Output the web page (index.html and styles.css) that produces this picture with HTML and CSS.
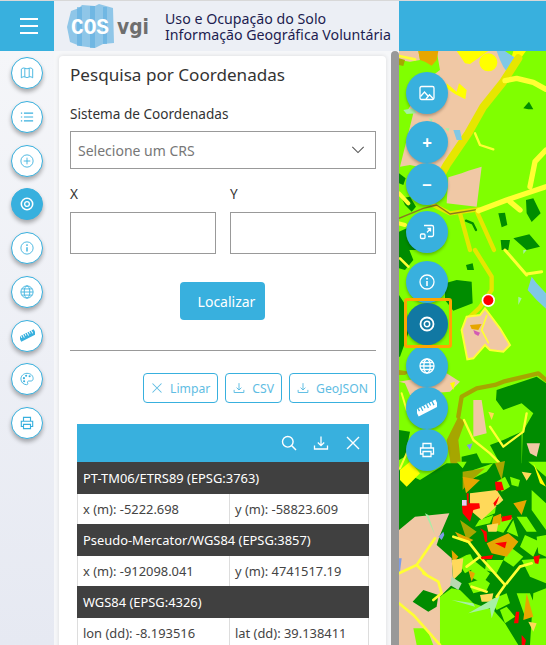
FILE: index.html
```html
<!DOCTYPE html>
<html lang="pt">

<head>
  <meta charset="UTF-8">
  <meta name="viewport" content="width=device-width, initial-scale=1.0">
  <title>COS VGI - Pesquisa por Coordenadas</title>
  <link rel="stylesheet" href="styles.css">
</head>

<body>
  <!-- Icons -->
  <svg class="sprite" aria-hidden="true">
    <symbol id="i-map" viewBox="0 0 16 16"><path d="M1.500 3.500Q3.500 1.500 5.500 2.500Q8 4 10.500 2.500Q12.500 1.500 14.500 3.500V13.500Q12.500 11.500 10.500 12.500Q8 14 5.500 12.500Q3.500 11.500 1.500 13.500ZM5.500 2.500V12.500M10.500 2.500V12.500" /></symbol>
    <symbol id="i-list" viewBox="0 0 16 16"><path d="M4.500 3.500H15M4.500 8H15M4.500 12.500H15M1 3.500H2.500M1 8H2.500M1 12.500H2.500" stroke-width="1.300" /></symbol>
    <symbol id="i-plus" viewBox="0 0 16 16"><circle cx="8" cy="8" r="7" /><path d="M8 4.200V11.800M4.200 8H11.800" /></symbol>
    <symbol id="i-target" viewBox="0 0 16 16"><circle cx="8" cy="8" r="6.500" stroke-width="1.800" /><circle cx="8" cy="8" r="2.700" stroke-width="1.500" /></symbol>
    <symbol id="i-info" viewBox="0 0 16 16"><circle cx="8" cy="8" r="7" /><path d="M8 7V12" stroke-width="1.600" /><circle class="solid" cx="8" cy="4.700" r="1" /></symbol>
    <symbol id="i-globe" viewBox="0 0 16 16"><circle cx="8" cy="8" r="7" /><ellipse cx="8" cy="8" rx="3.200" ry="7" /><path d="M1 8H15M2 4.500H14M2 11.500H14" /></symbol>
    <symbol id="i-ruler" viewBox="0 0 16 16"><path class="solid" fill-rule="evenodd" transform="rotate(-27 8 8)" d="M-1 5H17V11H-1ZM1 5V7.500H2V5ZM3.500 5V8.500H4.500V5ZM6 5V7.500H7V5ZM8.500 5V8.500H9.500V5ZM11 5V7.500H12V5ZM13.500 5V8.500H14.500V5Z" /></symbol>
    <symbol id="i-palette" viewBox="0 0 16 16"><path d="M8 1.500C4 1.500 1 4.500 1 8C1 11.500 4 14.500 7.500 14.500C9 14.500 9.200 13.500 8.700 12.500C8.200 11.200 9 10.300 10 10.300H12.500C14 10.300 15 9.300 15 7.500C15 4 12 1.500 8 1.500Z" /><circle class="solid" cx="4.500" cy="7" r="1.200" /><circle class="solid" cx="7" cy="4.200" r="1.200" /><circle class="solid" cx="11" cy="4.800" r="1.200" /><circle class="solid" cx="4.700" cy="10.500" r="1.200" /></symbol>
    <symbol id="i-print" viewBox="0 0 16 16"><path d="M4 6V1.500H12V6M4 12H1.500V6H14.500V12H12M4 9.500H12V14.500H4Z" stroke-width="1.300" /></symbol>
    <symbol id="i-image" viewBox="0 0 16 16"><rect x="1" y="1.500" width="14" height="13" rx="1.500" /><path d="M1.500 11.500L5.500 7L8.800 10.800M7 14L10.500 9.800L14.500 14" /></symbol>
    <symbol id="i-fit" viewBox="0 0 16 16"><path d="M5 1.500H13A1.500 1.500 0 0 1 14.500 3V11A1.500 1.500 0 0 1 13 12.500H9M8 8.500L11.500 4.500M8.500 4.500H11.500V7.500" /><rect x="1.500" y="10" width="4.500" height="4.500" rx="1" /></symbol>
    <symbol id="i-download" viewBox="0 0 16 16"><path d="M8 1.500V10.500M4.800 7.500L8 10.700L11.200 7.500M1.500 10.500V14H14.500V10.500" stroke-width="1.300" /></symbol>
    <symbol id="i-search" viewBox="0 0 16 16"><circle cx="6.800" cy="6.800" r="5.300" stroke-width="1.400" /><path d="M10.800 10.800L15 15" stroke-width="1.500" /></symbol>
    <symbol id="i-x" viewBox="0 0 16 16"><path d="M2 2L14 14M14 2L2 14" stroke-width="1.400" /></symbol>
    <symbol id="i-chevron" viewBox="0 0 16 16"><path d="M1.500 4.500L8 11L14.500 4.500" /></symbol>
  </svg>

  <div class="app">
    <header class="topbar">
      <button class="burger" aria-label="Menu"><span></span><span></span><span></span></button>
      <div class="brand">
        <svg class="logo" viewBox="0 0 96 46">
          <path class="logo-back" d="M6 8L14 5L17 2L30 3L34 1L48 5L49 40L38 41L30 45L15 43L5 39L2 24Z" />
          <path class="logo-stripe" d="M12 4H17V43H12ZM25 3H30V45H25ZM38 4H42V41H38Z" />
          <text class="logo-cos" x="6" y="31" textLength="38" lengthAdjust="spacingAndGlyphs">COS</text>
          <text class="logo-vgi" x="52" y="31" textLength="32" lengthAdjust="spacingAndGlyphs">vgi</text>
        </svg>
        <div class="brand-title">
          <div>Uso e Ocupação do Solo</div>
          <div>Informação Geográfica Voluntária</div>
        </div>
      </div>
      <div class="topbar-end"></div>
    </header>

    <div class="main">
      <nav class="sidebar">
        <button class="side-btn"><svg class="ico"><use href="#i-map" /></svg></button>
        <button class="side-btn"><svg class="ico"><use href="#i-list" /></svg></button>
        <button class="side-btn"><svg class="ico"><use href="#i-plus" /></svg></button>
        <button class="side-btn active"><svg class="ico"><use href="#i-target" /></svg></button>
        <button class="side-btn"><svg class="ico"><use href="#i-info" /></svg></button>
        <button class="side-btn"><svg class="ico"><use href="#i-globe" /></svg></button>
        <button class="side-btn"><svg class="ico ico-lg"><use href="#i-ruler" /></svg></button>
        <button class="side-btn"><svg class="ico"><use href="#i-palette" /></svg></button>
        <button class="side-btn"><svg class="ico"><use href="#i-print" /></svg></button>
      </nav>

      <div class="panel-area">
        <section class="panel">
          <h1 class="panel-title">Pesquisa por Coordenadas</h1>

          <label class="field-label">Sistema de Coordenadas</label>
          <div class="select">
            <span>Selecione um CRS</span>
            <svg class="select-arrow"><use href="#i-chevron" /></svg>
          </div>

          <div class="xy">
            <div class="xy-col">
              <label class="field-label">X</label>
              <input class="input" type="text">
            </div>
            <div class="xy-col">
              <label class="field-label">Y</label>
              <input class="input" type="text">
            </div>
          </div>

          <div class="locate-row"><button class="locate">Localizar</button></div>
          <hr class="divider">

          <div class="actions">
            <button class="action"><svg class="ico"><use href="#i-x" /></svg>Limpar</button>
            <button class="action"><svg class="ico"><use href="#i-download" /></svg>CSV</button>
            <button class="action"><svg class="ico"><use href="#i-download" /></svg>GeoJSON</button>
          </div>

          <div class="results">
            <div class="results-head">
              <svg class="ico"><use href="#i-search" /></svg>
              <svg class="ico"><use href="#i-download" /></svg>
              <svg class="ico"><use href="#i-x" /></svg>
            </div>
            <div class="crs">PT-TM06/ETRS89 (EPSG:3763)</div>
            <div class="vals"><div>x (m): -5222.698</div><div>y (m): -58823.609</div></div>
            <div class="crs">Pseudo-Mercator/WGS84 (EPSG:3857)</div>
            <div class="vals"><div>x (m): -912098.041</div><div>y (m): 4741517.19</div></div>
            <div class="crs">WGS84 (EPSG:4326)</div>
            <div class="vals"><div>lon (dd): -8.193516</div><div>lat (dd): 39.138411</div></div>
          </div>
        </section>
      </div>

      <div class="scrollbar"></div>

      <div class="map">
        <svg class="map-art" viewBox="399 51 147 594" preserveAspectRatio="none">
          <!-- top part -->
          <g transform="translate(390 50) scale(.3333)">
            <path class="beige" d="M27 3H85L90 30L60 35L27 30ZM140 3H330L345 50L355 55L290 150L240 240L175 340L140 362L60 345L30 350L70 190L50 185L110 90L150 60Z" />
            <path class="orange" d="M85 3H145L140 30L125 47L105 35L90 30Z" />
            <path class="olive-f" d="M27 25L45 30L40 48L27 45Z" />
            <path class="yellow-s" d="M27 18L75 28" stroke-width="8" />
            <path class="yellow-f" d="M200 3H295L240 42L225 40ZM370 3H408L385 35L360 40Z" />
            <circle class="yellow-f" cx="295" cy="37" r="27" />
            <path class="sky" d="M320 3H345L385 30L355 72L340 50L330 30Z" />
            <path class="olive-s" d="M385 25L340 95L280 170L235 250L170 345L148 385" stroke-width="24" />
            <path class="yellow-s" d="M345 92L380 85L430 97L468 118" stroke-width="16" />
            <path class="yellow-f" d="M170 100L200 125L207 100L230 120L226 148L195 132L170 115Z" />
            <path class="dark" d="M400 175L417 155L430 178L415 178Z" />
            <path class="sky" d="M190 240L210 240L216 270L200 270Z" />
            <path class="yellow-s" d="M255 250L270 285L310 298" stroke-width="7" />
            <path class="pale" d="M40 180L70 175L80 190L50 192ZM115 205L128 207L125 215ZM165 235H178L175 245Z" />
            <path class="beige" d="M175 382L215 370L235 362L275 350L260 470L170 460Z" />
            <path class="dark" d="M27 370L47 385L40 405L27 400ZM35 445L60 440L78 470L65 485L45 465ZM27 545L60 530L100 575L80 600H27ZM325 490L345 488L352 525L335 532ZM408 450L430 445L452 490L425 516L410 490ZM332 570L360 570L355 600H335ZM370 565L418 553L450 590L410 600Z" />
            <path class="dark-s" d="M228 512L248 520L258 540" stroke-width="7" />
            <path class="olive-s" d="M130 465L180 490L265 478M210 490L240 600M262 488L312 600" stroke-width="13" />
            <path class="brown" d="M27 505L100 475L140 465L180 492L265 478" />
            <path class="yellow-s" d="M265 482L350 450L468 410M420 410L435 335L468 300M360 455L390 480" stroke-width="16" />
            <path class="yellow-s" d="M27 430L55 460M27 520L45 525" stroke-width="12" />
          </g>

          <!-- middle part -->
          <g transform="translate(390 250) scale(.3333)">
            <path class="dark" d="M27 0H58L70 30L45 60L27 55ZM165 100L200 90L245 95L248 160L190 182L165 150ZM228 45L248 40L252 60L232 60ZM27 135L50 170L55 250L30 320L27 320Z" />
            <path class="yellow-s" d="M30 25L55 50" stroke-width="8" />
            <path class="olive-s" d="M255 0L305 80L305 120L270 172L235 205" stroke-width="13" />
            <path class="yellow-s" d="M345 0L410 75M410 72L455 65" stroke-width="9" />
            <path class="sky" d="M425 80L440 100L468 130V176L440 150L413 120Z" />
            <path class="pale" d="M385 140L395 145L385 165ZM400 0H410L400 12Z" />
            <path class="beige-line" d="M230 200L270 195L285 175L330 235L360 285L340 305L300 300L285 285L250 325L232 328L215 240Z" />
            <path class="orange" d="M240 225L275 222L265 240L245 237Z" />
            <path class="magenta" d="M250 240L270 248L265 258L254 252Z" />
            <path class="yellow-s" d="M290 197L275 240L295 278" stroke-width="5" />
            <circle class="dot-ring" cx="295" cy="151" r="20" />
            <circle class="dot" cx="295" cy="151" r="15" />
            <path class="beige" d="M27 395L170 370L210 395L180 425L60 435L45 400Z" />
            <path class="olive-f" d="M27 360L60 365L45 375L27 375ZM170 570L205 500L225 515L205 570L215 660H185Z" />
            <path class="olive-l" d="M205 500L215 440L260 415L315 405L340 395L445 370L468 390" stroke-width="13" />
            <path class="dark" d="M320 420L440 380L468 400V660H395L398 545L430 490L395 460L340 480L318 450ZM215 620L260 610L285 660H215ZM300 585L340 570L395 545V660H340Z" />
            <path class="beige" d="M250 450L275 450L290 550L250 560ZM410 580L450 580L440 620L420 610Z" />
            <path class="yellow-s" d="M222 510L250 570L300 610L340 650M300 530L340 590L400 545L410 490" stroke-width="7" />
            <path class="sand" d="M295 485L312 490L305 510Z" />
            <path class="blue" d="M230 585L248 580L240 600Z" />
            <path class="dark" d="M27 540L60 545L45 620L27 630Z" />
            <path class="yellow-s" d="M30 655L50 610M35 430L50 480" stroke-width="6" />
            <path class="yellow-f" d="M180 400L195 395L190 420Z" />
          </g>

          <!-- bottom part -->
          <g transform="translate(390 460) scale(.3333)">
            <path class="dark" d="M27 30L90 60L170 10H468V555H27Z" />
            <path class="bright" d="M200 5H230L218 25ZM250 30L310 10L290 35L250 55ZM415 5H468V50ZM360 50L390 60L385 80L365 75ZM380 170L410 170L440 215L410 215ZM425 90L468 130V210L425 150ZM320 65L345 50L360 80L335 95ZM310 210L350 150L368 175L340 218ZM405 225L450 245L430 290L390 260ZM395 300L468 295V370L420 350ZM235 370L280 355L300 370L290 390L250 400ZM380 400L420 400L440 450L405 470ZM330 450L350 440L375 470L345 490ZM268 180L310 165L300 190L255 200ZM430 400L468 385V555H420ZM200 300L240 280L260 320L225 340ZM290 300L340 300L320 340L285 330ZM275 130L320 120L315 160L280 175ZM370 180L385 230L350 215ZM250 300L300 340L280 370L240 350ZM360 260L400 290L370 320L340 300ZM440 230L468 225V290L445 280ZM300 420L350 400L360 430L320 450Z" />
            <path class="olive-f" d="M315 10L345 3L335 60ZM218 35L285 25L235 70L218 90ZM210 180L260 215L230 240Z" />
            <path class="yellow-f" d="M30 30L60 5L90 40L50 80L30 60ZM430 10L468 80L450 70Z" />
            <path class="orange" d="M218 50L270 60L228 100ZM370 130L410 120L395 165ZM310 170L335 160L330 195L305 195ZM195 215L250 240L235 250L210 240ZM290 250L355 220L385 245L350 290L305 280ZM185 270L205 290L188 310ZM235 330L255 340L245 365ZM410 400L430 470L400 480Z" />
            <path class="sand" d="M240 100L320 90L340 120L275 180L240 150ZM290 195L325 190L320 215L295 215ZM395 35L425 40L410 62ZM185 300L220 295L215 335L190 360ZM270 405L310 400L305 425L275 425ZM415 485L440 490L430 515Z" />
            <path class="dark" d="M318 135L368 130L372 170L340 175ZM210 265L250 255L260 280L225 285ZM330 330L395 320L380 360L340 350Z" />
            <path class="beige" d="M27 210L75 170L178 160L150 225L140 255L185 295L190 370L150 410V555H27Z" />
            <path class="dark" d="M68 425L100 390L145 405L140 440L115 455Z" />
            <path class="bright" d="M150 410L185 385L210 390L250 430L310 450L345 490L385 555H150ZM70 505L110 505L130 555H80Z" />
            <path class="grey" d="M185 350L215 370L205 390L180 375Z" />
            <path class="pale" d="M185 420L250 430L255 440ZM235 460L330 405L305 475L300 445ZM105 160L115 165L135 225Z" />
            <path class="blue" d="M145 230L160 215L163 225L155 240ZM27 295L35 295L30 335L27 335Z" />
            <path class="yellow-s" d="M27 340L80 315L135 235M80 315L110 345M100 340L145 365L155 400L130 420M27 430L70 465L110 510L150 555" stroke-width="8" />
            <path class="yellow-s" d="M190 230L235 245L270 290L230 320M270 290L345 375L320 410M425 310L390 320L350 370M245 380L290 395" stroke-width="8" />
            <path class="red" d="M216 138L232 135L230 100L236 100L236 130L268 130L270 145L250 150L240 185L218 160ZM315 65L335 65L342 90L318 92ZM335 170L365 165L365 178L335 185ZM270 205L290 215L292 245L285 245L280 220ZM315 250L350 245L345 265ZM272 290L310 285L305 297L275 298ZM430 290L450 285L445 312L435 310ZM378 455L388 455L385 490L372 490ZM395 525L408 540L405 555H395ZM310 130L328 108L322 125L315 140Z" />
            <path class="lilac" d="M216 120L230 120V137H216Z" />
          </g>
        </svg>

        <div class="map-tools">
          <button class="map-btn"><svg class="ico"><use href="#i-image" /></svg></button>
          <button class="map-btn mt-7"><b>+</b></button>
          <button class="map-btn"><b>−</b></button>
          <button class="map-btn mt-6"><svg class="ico"><use href="#i-fit" /></svg></button>
          <button class="map-btn mt-8"><svg class="ico"><use href="#i-info" /></svg></button>
          <button class="map-btn on"><svg class="ico"><use href="#i-target" /></svg><span class="focus-ring"></span></button>
          <button class="map-btn"><svg class="ico"><use href="#i-globe" /></svg></button>
          <button class="map-btn"><svg class="ico ico-lg"><use href="#i-ruler" /></svg></button>
          <button class="map-btn"><svg class="ico"><use href="#i-print" /></svg></button>
        </div>
      </div>
    </div>
  </div>
</body>

</html>
```

FILE: styles.css
```css
* {
  box-sizing: border-box;
}

html,
body {
  margin: 0;
  padding: 0;
  height: 100%;
  overflow: hidden;
}

body {
  font-family: "Noto Sans", sans-serif;
  color: #333;
}

button {
  font-family: inherit;
  padding: 0;
  border: none;
  cursor: pointer;
}

.sprite {
  position: absolute;
  width: 0;
  height: 0;
}

.ico {
  width: 14px;
  height: 14px;
  fill: none;
  stroke: currentColor;
  stroke-width: 1;
  flex: none;
}

.ico-lg {
  width: 15px;
  height: 15px;
}

.solid {
  fill: currentColor;
  stroke: none;
}

.app {
  display: flex;
  flex-direction: column;
  width: 546px;
  height: 645px;
}

/* Top bar */
.topbar {
  display: flex;
  height: 51px;
  flex: none;
  border-top: 1px solid #d8d8d8;
  background: #eceff5;
}

.burger {
  width: 54px;
  padding-left: 4px;
  background: #38b0de;
  display: flex;
  flex-direction: column;
  align-items: center;
  justify-content: center;
  gap: 5px;
}

.burger span {
  width: 18px;
  height: 2px;
  background: #fff;
}

.brand {
  display: flex;
  align-items: center;
  width: 345px;
  padding-left: 11px;
}

.logo {
  width: 96px;
  height: 46px;
  flex: none;
  margin-right: 4px;
}

.logo-back {
  fill: #8fc6e8;
}

.logo-stripe {
  fill: #5baee0;
  opacity: .6;
}

.logo-cos {
  font-family: "Liberation Mono", monospace;
  font-weight: 700;
  font-size: 22px;
  fill: #fff;
}

.logo-vgi {
  font-family: "DejaVu Sans", sans-serif;
  font-weight: 700;
  font-size: 22px;
  fill: #6e6e6e;
}

.brand-title {
  font-size: 14.200px;
  line-height: 16px;
  color: #1d1d50;
  white-space: nowrap;
  margin-top: 1px;
}

.topbar-end {
  flex: 1;
  background: #38b0de;
}

.main {
  display: flex;
  flex: 1;
  min-height: 0;
}

/* Left rail */
.sidebar {
  width: 54px;
  flex: none;
  display: flex;
  flex-direction: column;
  align-items: center;
  gap: 11.750px;
  padding-top: 6px;
  background: linear-gradient(#f5f6f9, #e6e9f2);
}

.side-btn {
  width: 32px;
  height: 32px;
  border-radius: 50%;
  border: 1px solid #38b0de;
  background: #fff;
  color: #38b0de;
  display: flex;
  align-items: center;
  justify-content: center;
  box-shadow: 0 3px 4px rgba(0, 0, 0, .3);
}

.side-btn.active {
  background: #38b0de;
  color: #fff;
}

/* Search panel */
.panel-area {
  width: 337px;
  flex: none;
  padding: 5px 5px 0;
  background: #f6f7f9;
  overflow: hidden;
}

.panel {
  background: #fff;
  height: 640px;
  padding: 0 10px 0 11px;
  border-radius: 4px 4px 0 0;
  box-shadow: 0 0 4px rgba(0, 0, 0, .12);
}

.panel-title {
  margin: 0;
  padding-top: 6px;
  font-size: 17.100px;
  line-height: 26px;
  font-weight: 400;
  color: #333;
}

.field-label {
  display: block;
  font-size: 13.600px;
  line-height: 18px;
  color: #333;
}

.panel-title + .field-label {
  margin-top: 17px;
}

.select {
  display: flex;
  align-items: center;
  justify-content: space-between;
  height: 38px;
  margin-top: 8px;
  padding: 0 10px 0 7px;
  border: 1px solid #999;
  font-size: 14px;
  color: #777;
}

.select-arrow {
  width: 14px;
  height: 14px;
  fill: none;
  stroke: #555;
  stroke-width: 1.200;
}

.xy {
  display: flex;
  gap: 14px;
  margin-top: 16px;
}

.xy-col {
  flex: 1;
}

.input {
  display: block;
  width: 100%;
  height: 42px;
  margin-top: 9px;
  border: 1px solid #999;
  border-radius: 0;
  background: #fff;
}

.locate-row {
  display: flex;
  justify-content: center;
  margin-top: 28px;
}

.locate {
  width: 85px;
  height: 38px;
  background: #38b0de;
  color: #fff;
  font-size: 14px;
  border-radius: 4px;
  padding-left: 8px;
  margin-left: -1px;
}

.divider {
  margin: 30px 0 0;
  border: none;
  border-top: 1px solid #999;
}

.actions {
  display: flex;
  justify-content: flex-end;
  gap: 7px;
  margin-top: 22px;
}

.action {
  display: flex;
  align-items: center;
  gap: 7px;
  height: 30px;
  padding: 0 7px;
  background: #fff;
  border: 1px solid #38b0de;
  border-radius: 4px;
  color: #5fbde3;
  font-size: 12.200px;
}

.action .ico {
  width: 12px;
  height: 12px;
}

/* Result table */
.results {
  width: 292px;
  margin: 21px 0 0 7px;
  font-size: 12.900px;
}

.results-head {
  display: flex;
  align-items: center;
  justify-content: flex-end;
  gap: 16px;
  height: 38px;
  padding-right: 8px;
  background: #38b0de;
  color: #fff;
}

.results-head .ico {
  width: 16px;
  height: 16px;
}

.crs {
  display: flex;
  align-items: center;
  height: 32px;
  padding-left: 6px;
  background: #404040;
  color: #fff;
}

.vals {
  display: grid;
  grid-template-columns: 151px 1fr;
  height: 30px;
  border-left: 1px solid #ddd;
  border-right: 1px solid #ddd;
}

.vals div {
  display: flex;
  align-items: center;
  padding-left: 5px;
  color: #444;
}

.vals div + div {
  border-left: 1px solid #ddd;
}

.scrollbar {
  width: 8px;
  flex: none;
  background: #999;
  border-radius: 4px 4px 0 0;
}

/* Map */
.map {
  position: relative;
  flex: 1;
  background: #80ff00;
  overflow: hidden;
}

.map-art {
  position: absolute;
  left: 0;
  top: 0;
  width: 100%;
  height: 100%;
  display: block;
}

.beige { fill: #f0c8a5; }
.orange { fill: #e6a600; }
.olive-f { fill: #a6a600; }
.yellow-f { fill: #ffff00; }
.sky { fill: #80c8e6; }
.dark { fill: #008c00; }
.bright { fill: #80ff00; }
.pale { fill: #a6f0a6; }
.sand { fill: #ffd95a; }
.blue { fill: #7d9ce6; }
.grey { fill: #b8d8b0; }
.red { fill: #ff0000; }
.lilac { fill: #f0c8f0; }
.magenta { fill: #d25ab4; }

.yellow-s,
.olive-s,
.olive-l,
.dark-s,
.brown {
  fill: none;
  stroke-linejoin: round;
  stroke-linecap: round;
}

.yellow-s { stroke: #ffff33; }
.olive-s { stroke: #e6e600; }
.olive-l { stroke: #a6a600; }
.dark-s { stroke: #008c00; }
.brown { stroke: #8a7a20; stroke-width: 4; }

.beige-line {
  fill: #f0c8a5;
  stroke: #ffff33;
  stroke-width: 6;
}

.dot-ring { fill: #fff; }
.dot { fill: #ff0000; }

/* Map tools sit over the map */
.map-tools {
  position: absolute;
  left: 7px;
  top: 21px;
  display: flex;
  flex-direction: column;
}

.map-btn {
  position: relative;
  width: 42px;
  height: 42px;
  border-radius: 50%;
  background: #38b0de;
  color: #fff;
  display: flex;
  align-items: center;
  justify-content: center;
  box-shadow: 0 2px 3px rgba(0, 0, 0, .25);
}

.map-btn .ico {
  width: 16px;
  height: 16px;
  stroke-width: 1.300;
}

.map-btn .ico-lg {
  width: 20px;
  height: 20px;
}

.map-btn b {
  font-size: 17px;
  line-height: 1;
  font-weight: 700;
}

.mt-6 { margin-top: 6px; }
.mt-7 { margin-top: 7px; }
.mt-8 { margin-top: 8px; }

.map-btn.on {
  z-index: 2;
  background: #1178a3;
}

.focus-ring {
  position: absolute;
  left: -2px;
  top: -5px;
  width: 48px;
  height: 50px;
  border: 3px solid #ffa500;
  border-radius: 3px;
}
```
